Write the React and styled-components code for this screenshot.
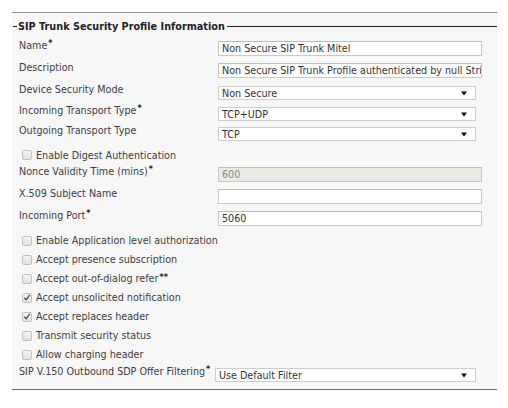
import React from 'react';
import styled, {createGlobalStyle} from 'styled-components';

const GlobalStyle = createGlobalStyle`
    html, body {
        margin: 0;
        padding: 0;
        background: #ffffff;
    }
    body {
        font-family: "DejaVu Sans", Verdana, sans-serif;
        font-size: 9.6px;
        color: #3d3d3d;
    }
`;

const textRows = [
    {label: 'Name', req: '*', kind: 'input', value: 'Non Secure SIP Trunk Mitel', h: 22},
    {label: 'Description', kind: 'input', value: 'Non Secure SIP Trunk Profile authenticated by null String', h: 22},
    {label: 'Device Security Mode', kind: 'select', value: 'Non Secure', h: 21},
    {label: 'Incoming Transport Type', req: '*', kind: 'select', value: 'TCP+UDP', h: 20},
    {label: 'Outgoing Transport Type', kind: 'select', value: 'TCP', h: 23},
];

const midRows = [
    {label: 'Nonce Validity Time (mins)', req: '*', kind: 'disabled', value: '600', h: 22},
    {label: 'X.509 Subject Name', kind: 'input', value: '', h: 22},
    {label: 'Incoming Port', req: '*', kind: 'input', value: '5060', h: 23},
];

const checks = [
    {label: 'Enable Application level authorization'},
    {label: 'Accept presence subscription'},
    {label: 'Accept out-of-dialog refer', req: '**'},
    {label: 'Accept unsolicited notification', checked: true},
    {label: 'Accept replaces header', checked: true},
    {label: 'Transmit security status'},
    {label: 'Allow charging header'},
];

const Arrow = () => (
    <svg width="6" height="5" viewBox="0 0 6 5">
        <path d="M0 0.5 L6 0.5 L3 4.5 Z" fill="#111" />
    </svg>
);

const Check = ({checked}) => (
    <Box>
        {checked && (
            <svg width="9" height="9" viewBox="0 0 9 9">
                <path d="M1.5 4.8 L3.6 7 L7.6 1.6" stroke="#4a4a4a" strokeWidth="1.4" fill="none" />
            </svg>
        )}
    </Box>
);

const Control = ({kind, value}) => {
    if (kind === 'select') {
        return (
            <Select>
                <span>{value}</span>
                <Arrow />
            </Select>
        );
    }
    return <Input $disabled={kind === 'disabled'}>{value}</Input>;
};

const FieldRow = ({row}) => (
    <Row $h={row.h}>
        <Label>{row.label}{row.req && <Req>{row.req}</Req>}</Label>
        <Control kind={row.kind} value={row.value} />
    </Row>
);

const CheckRow = ({item, h}) => (
    <CheckLine $h={h || 19}>
        <Check checked={item.checked} />
        <span>{item.label}{item.req && <Req>{item.req}</Req>}</span>
    </CheckLine>
);

const App = () => (
    <>
        <GlobalStyle />
        <Panel>
            <Legend>SIP Trunk Security Profile Information</Legend>
            <Rows>
                {textRows.map(r => <FieldRow key={r.label} row={r} />)}
                <CheckRow item={{label: 'Enable Digest Authentication'}} h={18} />
                {midRows.map(r => <FieldRow key={r.label} row={r} />)}
                {checks.map(c => <CheckRow key={c.label} item={c} />)}
                <Row $h={20}>
                    <SipLabel>SIP V.150 Outbound SDP Offer Filtering<Req>*</Req></SipLabel>
                    <Select $wide>
                        <span>Use Default Filter</span>
                        <Arrow />
                    </Select>
                </Row>
            </Rows>
        </Panel>
    </>
);

const Panel = styled.div`
    margin: 12px 0 0 12px;
    width: 485px;
    background: #f7f7f7;
    border-top: 1px solid #8e8e8e;
    border-bottom: 1px solid #6f6f6f;
    padding: 6px 0 5px 0;
`;

const Legend = styled.div`
    display: flex;
    align-items: center;
    height: 14px;
    padding-left: 1px;
    font-weight: bold;
    font-size: 9.7px;
    color: #222;

    &::before {
        content: '';
        width: 4px;
        height: 1px;
        margin-right: 1px;
        background: #222;
    }
    &::after {
        content: '';
        flex: 1;
        height: 1px;
        margin-left: 2px;
        background: #222;
    }
`;

const Rows = styled.div`
    display: flex;
    flex-direction: column;
    padding-top: 5px;
`;

const Row = styled.div`
    display: flex;
    align-items: flex-start;
    height: ${p => p.$h}px;
`;

const Label = styled.div`
    width: 199px;
    padding-left: 7px;
    padding-top: 1px;
    line-height: 14px;
    white-space: nowrap;
`;

const SipLabel = styled(Label)`
    width: 196px;
`;

const Req = styled.sup`
    font-size: 8px;
    font-weight: bold;
    vertical-align: top;
    line-height: 10px;
    margin-left: 1px;
    color: #222;
`;

const Input = styled.div`
    box-sizing: border-box;
    margin-top: 3px;
    width: 264px;
    height: 15px;
    padding: 0 3px;
    line-height: 13px;
    overflow: hidden;
    white-space: nowrap;
    background: ${p => (p.$disabled ? '#ebebe6' : '#ffffff')};
    border: 1px solid #c9c9c9;
    border-top-color: #bdbdbd;
    color: ${p => (p.$disabled ? '#8a8a8a' : '#333')};
`;

const Select = styled.div`
    box-sizing: border-box;
    margin-top: 4px;
    width: ${p => (p.$wide ? '261px' : '258px')};
    height: 14px;
    padding: 0 8px 0 3px;
    display: flex;
    align-items: center;
    justify-content: space-between;
    background: #ffffff;
    border: 1px solid #cfcfcf;
    color: #333;
    white-space: nowrap;
`;

const CheckLine = styled.div`
    display: flex;
    align-items: center;
    gap: 4px;
    height: ${p => p.$h}px;
    padding-left: 10px;
`;

const Box = styled.span`
    box-sizing: border-box;
    width: 10px;
    height: 10px;
    display: flex;
    align-items: center;
    justify-content: center;
    border: 1px solid #c2c2c2;
    border-radius: 2px;
    background: linear-gradient(#f4f4f4, #e0e0e0);
`;

export default App;
